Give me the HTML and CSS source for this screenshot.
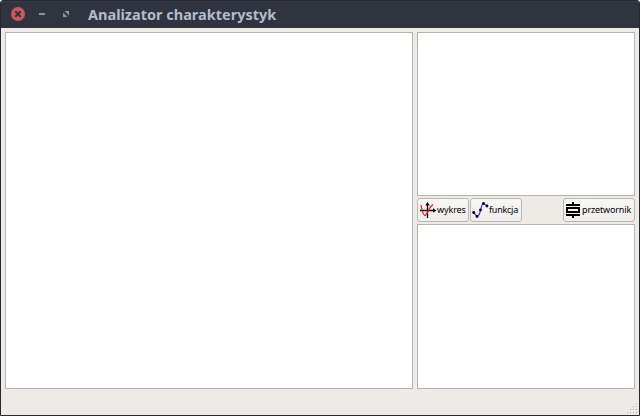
FILE: index.html
```html
<!DOCTYPE html>
<html lang="pl">
<head>
<meta charset="utf-8">
<title>Analizator charakterystyk</title>
<link rel="stylesheet" href="styles.css">
</head>
<body>
<div class="window">
  <header class="titlebar">
    <svg class="controls" width="80" height="28" viewBox="0 0 80 28">
      <circle cx="17" cy="14" r="7" fill="#cc575d"/>
      <path d="M14.300 11.300l5.400 5.400M19.700 11.300l-5.400 5.400" stroke="#2f343f" stroke-width="2"/>
      <path d="M38 14h6" stroke="#90939b" stroke-width="2"/>
      <path d="M63.500 11h4.500v4.500zM62 12.500v4.500h4.500z" fill="#90939b"/>
    </svg>
    <h1 class="title">Analizator charakterystyk</h1>
  </header>
  <main class="content">
    <div class="panel"></div>
    <div class="side">
      <div class="panel"></div>
      <div class="toolbar">
        <button class="button plot">
          <svg width="18" height="18" viewBox="0 0 18 18">
            <path d="M1 9.500h13M8.500 17V4" stroke="#000" stroke-width="1.300"/>
            <path d="M6.300 4.500l2.200-3.500 2.200 3.500zM14 7.300l3.500 2.200-3.500 2.200z"/>
            <path d="M2 4C3 10 4.200 14.500 6 14.500C8 14.500 9 7 14 3.500" fill="none" stroke="#f01818" stroke-width="1.300"/>
          </svg>
          <span>wykres</span>
        </button>
        <button class="button func">
          <svg width="18" height="18" viewBox="0 0 18 18">
            <path d="M1.500 11.500L5 15.500C8 14.500 7.500 12 8.500 9S9.500 3 11.500 2.500L15 5" fill="none" stroke="#3838ff" stroke-width="1.200"/>
            <circle cx="1.700" cy="11.500" r="1.400"/><circle cx="5" cy="15.500" r="1.400"/><circle cx="8.500" cy="9" r="1.400"/><circle cx="11.500" cy="2.500" r="1.400"/><circle cx="15" cy="5" r="1.400"/>
          </svg>
          <span>funkcja</span>
        </button>
        <button class="button conv">
          <svg width="18" height="18" viewBox="0 0 18 18">
            <path d="M1 4h14M1 14h14M8 1v2M8 15v2" stroke="#000" stroke-width="2"/>
            <rect x="2" y="7" width="12" height="4" fill="none" stroke="#000" stroke-width="2"/>
          </svg>
          <span>przetwornik</span>
        </button>
      </div>
      <div class="panel"></div>
    </div>
  </main>
  <footer class="status">
    <svg width="12" height="12" viewBox="0 0 12 12" fill="#b5b0aa">
      <path d="M9 0h1v1h-1zM6 3h1v1h-1zM9 3h1v1h-1zM3 6h1v1h-1zM6 6h1v1h-1zM9 6h1v1h-1zM0 9h1v1h-1zM3 9h1v1h-1zM6 9h1v1h-1zM9 9h1v1h-1z"/>
    </svg>
  </footer>
</div>
</body>
</html>
```
FILE: styles.css
```css
* { box-sizing: border-box; }
body { margin: 0; background: #fff; }
.window {
  width: 640px;
  height: 416px;
  display: flex;
  flex-direction: column;
  border: 1px solid #262933;
  border-radius: 3px 3px 0 0;
  background: #eeebe7;
  overflow: hidden;
}
.titlebar {
  height: 27px;
  display: flex;
  align-items: center;
  background: #2f343f;
  border-top: 1px solid #383d49;
}
.controls { margin-top: -2px; }
.title {
  margin: -2px 0 0 7px;
  font: bold 14.5px/20px "Noto Sans", sans-serif;
  color: #b4bccb;
  white-space: nowrap;
}
.content {
  height: 361px;
  padding: 4px 4px 0;
  display: grid;
  grid-template-columns: 408px 218px;
  column-gap: 4px;
}
.panel { background: #fff; border: 1px solid #b7b3af; }
.side {
  display: grid;
  grid-template-rows: 164px 24px 165px;
  row-gap: 2px;
}
.toolbar { display: flex; gap: 1px; }
.button {
  height: 24px;
  padding: 0 0 0 1px;
  display: flex;
  align-items: center;
  gap: 0;
  border: 1px solid #b9b5b1;
  border-radius: 3px;
  background: linear-gradient(#f8f7f6, #efedeb);
  font: 9px/12px "Noto Sans", sans-serif;
  color: #000;
  white-space: nowrap;
}
.button svg { flex: none; }
.plot { width: 52px; letter-spacing: -0.1px; }
.func { width: 52px; letter-spacing: -0.25px; }
.func span { margin-left: -1px; }
.conv { width: 72px; margin-left: auto; letter-spacing: -0.15px; }
.conv span { margin-left: -1px; }
.status {
  flex: 1;
  display: flex;
  align-items: flex-end;
  justify-content: flex-end;
}
```
